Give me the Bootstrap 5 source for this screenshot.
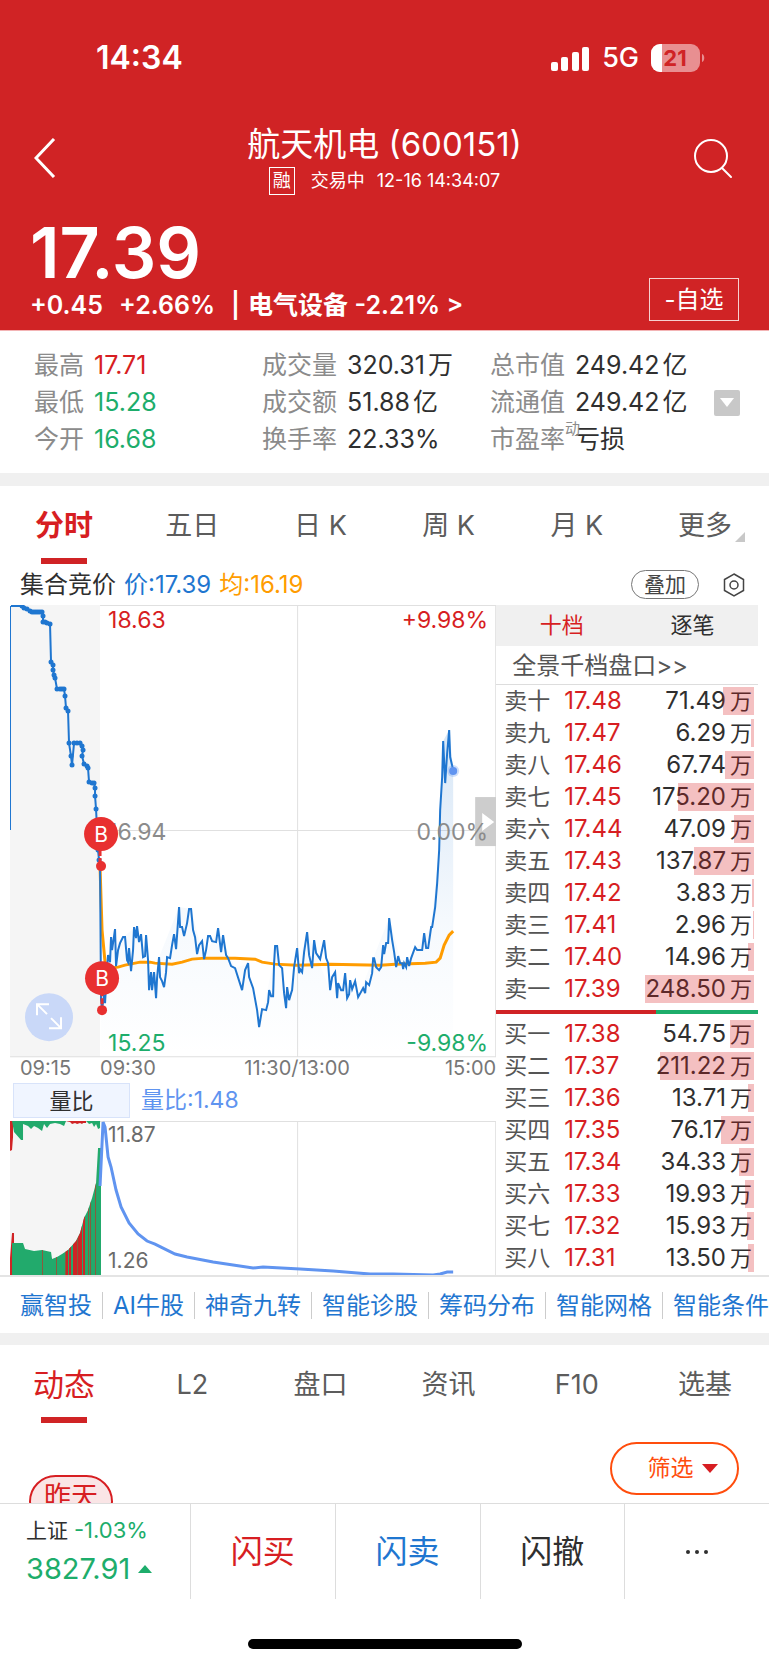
<!DOCTYPE html>
<html lang="zh-CN">
<head>
<meta charset="utf-8">
<meta name="viewport" content="width=device-width, initial-scale=1">
<title>航天机电 (600151)</title>
<link rel="stylesheet" href="https://cdn.jsdelivr.net/npm/bootstrap@5.3.0/dist/css/bootstrap.min.css">
<style>
  :root { --up: #d71e22; --down: #1dad6b; --brand: #d02325; --link: #1f76d0; --ink: #2f2f2f; --muted: #8b8b8b; }
  body { font-family: Inter, "Noto Sans CJK SC", sans-serif; color: var(--ink); background: #fff; overflow-x: hidden; }
  button { font-family: inherit; }
  a { text-decoration: none; }
  .plain { background: none; border: 0; padding: 0; color: inherit; }
  .up { color: var(--up); }
  .down { color: var(--down); }
  .blue { color: var(--link); }

  .quote-head { background: var(--brand); color: #fff; padding: 39px 30px 8px; border-bottom: 1px solid #f3b4b5; }
  .status { height: 38px; padding: 0 34px 0 66px; }
  .clock { font-size: 32px; font-weight: 600; }
  .network { font-size: 27px; font-weight: 500; }
  .title-row { margin-top: 47px; }
  .title-row h1 { font-size: 33px; line-height: 40px; font-weight: 400; }
  .head-icon { width: 46px; margin-top: 14px; }
  .session { font-size: 18px; line-height: 34px; }
  .margin-flag { border: 1px solid #fff; width: 26px; height: 28px; font-size: 18px; line-height: 26px; text-align: center; }
  .last { font-size: 70px; line-height: 70px; font-weight: 600; }
  .change { font-size: 25px; line-height: 34px; font-weight: 600; }
  .price-row { margin-top: 20px; }
  .watch { border: 1px solid #f6d0d0; width: 90px; height: 43px; font-size: 24px; margin-bottom: 1px; }

  .stats { padding: 16px 29px 15px 34px; font-size: 25px; line-height: 37px; }
  .stats dt { font-weight: 400; color: var(--muted); }
  .stats dd { margin: 0 0 0 10px; }
  .stats .s1, .stats .s2 { width: 228px; }
  .unit { margin-left: 3px; }
  .dyn { position: absolute; left: 100%; top: -4px; font-size: 15px; line-height: 24px; }
  .more-stats { width: 26px; height: 26px; background: #c8c8c8; border-radius: 2px; }
  .band { height: 13px; background: #f0f0f0; }
  .band-thin { height: 12px; }

  .tabs-row a { flex: 1 1 0; padding-top: 20px; font-size: 27px; line-height: 40px; color: #5c5c5c; text-align: center; }
  .tabs-row a.active { color: var(--up); font-size: 31px; }
  .tabs-row a.active::after { content: ""; display: block; width: 46px; height: 6px; margin: 12px auto 0; background: var(--brand); }
  .period a.active { font-size: 29px; font-weight: 700; }
  .corner { margin: 0 -13px 0 3px; vertical-align: -7px; }

  .info { height: 41px; padding: 0 24px 0 20px; font-size: 24px; }
  .avg { color: #ff9c00; }
  .overlay-btn { border: 1px solid #777; border-radius: 15px; width: 68px; height: 29px; font-size: 21px; line-height: 26px; color: #444; }

  .board { padding: 0 11px 0 10px; }
  .charts { flex: 0 0 65%; }
  .charts svg { display: block; width: 100%; height: auto; }
  .indicator { height: 39px; padding: 0 0 2px 3px; font-size: 23px; color: #6094f0; gap: 11px; }
  .indicator button { width: 117px; height: 35px; border: 1px solid #d8e3fa; background: #f0f5ff; font-size: 22px; line-height: 30px; color: var(--ink); }

  .book-tabs { height: 41px; background: #f0f0f0; font-size: 22px; }
  .depth-link { height: 39px; padding-left: 16px; font-size: 24px; line-height: 40px; color: #555; border-bottom: 1px solid #ddd; }
  .depth { width: 100%; font-size: 24px; line-height: 32px; }
  .depth td, .depth th { padding: 0; height: 32px; font-weight: 400; white-space: nowrap; }
  .depth th { width: 68px; padding-left: 8px; color: #555; font-size: 23px; }
  .depth .vol { position: relative; text-align: right; padding-right: 6px; }
  .depth .vol span { position: absolute; right: 4px; top: 2px; height: 28px; background: rgba(215, 30, 34, .28); }
  .depth .vol i { font-style: normal; font-size: 22px; margin-left: 4px; }
  .split { height: 4px; margin: 5px 0 4px; background: var(--down); }
  .split div { height: 4px; background: var(--brand); }

  .tools { height: 58px; border-top: 2px solid #e4e4e4; padding-left: 10px; overflow: hidden; white-space: nowrap; font-size: 24px; }
  .tools a { color: var(--link); padding: 0 10px; line-height: 27px; flex: none; }
  .tools a + a { border-left: 1px solid #ccc; }

  .feed { padding: 19px 30px 0 29px; }
  .filter { width: 129px; height: 53px; border: 2px solid #ff4d0d; border-radius: 27px; color: #ff4d0d; font-size: 23px; }
  .day { margin-top: 33px; width: 84px; height: 53px; border: 2px solid var(--up); border-radius: 27px; background: #fae5e6; color: var(--up); font-size: 27px; line-height: 40px; text-align: center; }

  .trade { background: #fff; border-top: 1px solid #ddd; }
  .trade-row { height: 95px; }
  .trade-row button { flex: 1 1 0; border-left: 1px solid #ddd; font-size: 32px; }
  .index { flex: 0 0 190px; padding: 8px 0 0 26px; }
  .index-top { font-size: 21px; line-height: 36px; }
  .index-top .down { font-size: 22px; }
  .index-val { font-size: 29px; line-height: 40px; }
  .home-bar { width: 274px; height: 10px; border-radius: 5px; background: #000; margin: 40px auto 16px; }
</style>
</head>
<body>
<header class="quote-head">
  <div class="status d-flex align-items-center justify-content-between">
    <span class="clock">14:34</span>
    <span class="d-flex align-items-center">
      <svg width="39" height="25" viewBox="0 0 39 25" fill="#fff"><rect x="0" y="16" width="7" height="9" rx="2"/><rect x="10" y="11" width="7" height="14" rx="2"/><rect x="21" y="6" width="7" height="19" rx="2"/><rect x="31" y="1" width="7" height="24" rx="2"/></svg>
      <span class="network mx-2 ps-1">5G</span>
      <svg class="ms-1" width="54" height="28" viewBox="0 0 54 28"><defs><clipPath id="cell"><rect width="49" height="28" rx="9"/></clipPath></defs><g clip-path="url(#cell)"><rect width="49" height="28" fill="#e88f91"/><rect width="11" height="28" fill="#fff"/></g><path d="M51 10c3 1 3 7 0 8z" fill="#e88f91"/><text x="24" y="22" text-anchor="middle" font-size="22" font-weight="700" fill="#d02325">21</text></svg>
    </span>
  </div>
  <div class="title-row d-flex align-items-start justify-content-between">
    <button class="plain head-icon d-flex ps-1" aria-label="返回"><svg width="24" height="40" viewBox="0 0 24 40" fill="none" stroke="#fff" stroke-width="3"><path d="M20 1 2 20l18 19"/></svg></button>
    <div class="text-center">
      <h1 class="m-0">航天机电 (600151)</h1>
      <div class="session d-flex align-items-center justify-content-center"><span class="margin-flag">融</span><span class="ms-3">交易中</span><span class="ms-2 ps-1">12-16 14:34:07</span></div>
    </div>
    <button class="plain head-icon d-flex justify-content-end pe-1" aria-label="搜索"><svg width="42" height="42" viewBox="0 0 42 42" fill="none" stroke="#fff" stroke-width="2"><circle cx="18" cy="18" r="16"/><path d="m29 30 9 9" stroke-linecap="round"/></svg></button>
  </div>
  <div class="price-row d-flex align-items-end justify-content-between">
    <div>
      <div class="last">17.39</div>
      <div class="change d-flex"><span>+0.45</span><span class="ms-3">+2.66%</span><span class="ms-3">|</span><span class="ms-2">电气设备 -2.21% &gt;</span></div>
    </div>
    <button class="plain watch">-自选</button>
  </div>
</header>

<main>
<section class="stats d-flex">
  <dl class="s1 m-0">
    <div class="d-flex"><dt>最高</dt><dd class="up">17.71</dd></div>
    <div class="d-flex"><dt>最低</dt><dd class="down">15.28</dd></div>
    <div class="d-flex"><dt>今开</dt><dd class="down">16.68</dd></div>
  </dl>
  <dl class="s2 m-0">
    <div class="d-flex"><dt>成交量</dt><dd>320.31<span class="unit">万</span></dd></div>
    <div class="d-flex"><dt>成交额</dt><dd>51.88<span class="unit">亿</span></dd></div>
    <div class="d-flex"><dt>换手率</dt><dd>22.33%</dd></div>
  </dl>
  <dl class="m-0">
    <div class="d-flex"><dt>总市值</dt><dd>249.42<span class="unit">亿</span></dd></div>
    <div class="d-flex"><dt>流通值</dt><dd>249.42<span class="unit">亿</span></dd></div>
    <div class="d-flex"><dt class="position-relative">市盈率<span class="dyn">动</span></dt><dd>亏损</dd></div>
  </dl>
  <button class="plain more-stats d-flex align-items-center justify-content-center ms-auto align-self-center" aria-label="展开"><svg width="14" height="9" viewBox="0 0 14 9"><path d="M0 0h14L7 9z" fill="#fff"/></svg></button>
</section>
<div class="band"></div>

<nav class="tabs-row period d-flex">
  <a class="active" href="#">分时</a><a href="#">五日</a><a href="#">日 K</a><a href="#">周 K</a><a href="#">月 K</a>
  <a href="#">更多<svg class="corner" width="10" height="10" viewBox="0 0 10 10"><path d="M10 0v10H0z" fill="#c8c8c8"/></svg></a>
</nav>

<div class="info d-flex align-items-center">
  <span>集合竞价</span><span class="blue ms-2">价:17.39</span><span class="avg ms-2">均:16.19</span>
  <button class="plain overlay-btn ms-auto me-4">叠加</button>
  <button class="plain d-flex" aria-label="设置"><svg width="22" height="26" viewBox="0 0 22 26" fill="none" stroke="#444" stroke-width="1.500"><path d="M11 2 20.500 7.500v11L11 24 1.500 18.500v-11z"/><circle cx="11" cy="13" r="4"/></svg></button>
</div>

<section class="board d-flex">
  <div class="charts">
    <svg viewBox="10 605 486 477" font-size="23">
      <defs>
        <linearGradient id="fade" x1="0" y1="0" x2="0" y2="1"><stop offset="0" stop-color="#1f76d0" stop-opacity=".18"/><stop offset=".6" stop-color="#1f76d0" stop-opacity=".04"/><stop offset="1" stop-color="#1f76d0" stop-opacity="0"/></linearGradient>
        <marker id="dot" markerWidth="6" markerHeight="6" refX="3" refY="3" markerUnits="userSpaceOnUse"><circle cx="3" cy="3" r="2.500" fill="#1f76d0"/></marker>
      </defs>
      <rect x="10" y="605" width="90" height="452" fill="#f5f5f5"/>
      <path d="M100 605.500h396M297.500 605v452M100 830.500h396M10 1056.500h486M495.500 605v452" fill="none" stroke="#e0e0e0"/>
      <path fill="url(#fade)" d="M101 1056V1008L108 955 123 937 137 926 152 990 159 957 179 907 191 909 204 959 218 928 235 968 248 963 259 1027 277 946 286 1008 307 932 330 990 345 990 358 997 373 958 389 918 403 969 431 927 439 850 443 741 449 730 453 770V1056z"/>
      <g fill="none" stroke-linejoin="miter">
        <path stroke="#ff9c00" stroke-width="3" d="M100 867 102 930 105 962 110 968 118 967 125 965 140 962 150 962 155 963 172 964 182 962 192 959 205 958 235 958 255 959 262 962 275 964 297 965 330 964 380 965 395 964 425 963 436 962 440 958 444 945 449 935 453 931"/>
        <path stroke="#1f76d0" d="M10.500 830V606"/>
        <path stroke="#1f76d0" stroke-width="2" marker-mid="url(#dot)" d="M11 606 22 606 24 608 27 609 30 611 32 612 34 612 36 612 38 612 40 612 42 612 43 616 43 622 45 622 47 623 50 624 51 662 53 665 53 670 54 675 55 678 57 689 60 689 62 689 64 689 65 696 66 708 68 711 69 743 71 756 72 765 74 743 77 743 80 743 82 746 83 750 82 756 84 764 87 766 88 768 89 782 92 783 94 783 95 788 95 796 96 809 98 850 99 860 100 868"/>
        <path stroke="#1f76d0" stroke-width="2" d="M100 867 101 1000 102 1009 104 995 105 1003 107 967 108 955 110 962 111 937 112 950 115 929 116 966 118 950 120 943 123 937 125 937 127 960 128 962 129 948 131 971 133 950 134 927 136 938 137 926 139 942 141 934 143 957 145 956 146 935 148 960 149 990 151 972 152 990 154 972 156 998 157 978 159 957 160 977 162 981 164 987 166 972 167 957 170 958 172 945 174 934 176 949 179 907 180 927 182 927 184 936 187 923 189 909 191 909 193 930 195 937 197 954 199 945 202 941 204 959 206 950 208 936 210 936 212 941 216 942 218 928 221 952 223 935 226 955 228 958 231 966 235 968 242 990 245 970 248 963 249 977 253 988 257 1010 259 1027 262 1009 266 1010 268 1002 269 990 271 996 273 996 274 963 275 946 277 946 279 965 282 968 284 993 286 1008 287 987 289 1000 291 993 292 990 294 967 297 948 299 973 300 969 302 972 304 952 307 932 309 955 312 968 314 940 316 953 320 959 324 940 326 958 328 963 330 990 332 977 335 972 337 998 338 983 341 990 343 990 345 973 347 998 349 994 350 980 352 989 355 981 358 997 363 988 365 993 366 982 369 985 372 973 373 958 374 958 376 967 379 970 381 967 383 945 384 954 386 943 388 943 389 918 392 940 394 952 396 967 398 956 400 963 402 963 403 969 404 963 406 967 407 957 409 966 411 958 415 947 417 950 422 950 424 933 426 948 428 948 431 927 432 927 435 907 437 883 439 850 440 810 442 777 443 741 445 783 447 753 449 730 450 757 453 770"/>
      </g>
      <circle cx="453" cy="771" r="6" fill="#6094f0" opacity=".3"/><circle cx="453" cy="771" r="4" fill="#6094f0"/>
      <rect x="475" y="797" width="21" height="49" fill="#cdcdcd"/><path d="M482 813v18l12-9z" fill="#fff"/>
      <text x="108" y="628" fill="#d71e22">18.63</text>
      <text x="488" y="628" text-anchor="end" fill="#d71e22">+9.98%</text>
      <text x="108" y="840" fill="#8b8b8b">16.94</text>
      <text x="488" y="840" text-anchor="end" fill="#8b8b8b">0.00%</text>
      <text x="108" y="1051" fill="#1dad6b">15.25</text>
      <text x="488" y="1051" text-anchor="end" fill="#1dad6b">-9.98%</text>
      <path d="M100 850v16M102 990v20" stroke="#e83030" stroke-width="3" stroke-dasharray="6 2"/>
      <g fill="#e83030"><circle cx="101" cy="866" r="5"/><circle cx="102" cy="1010" r="5"/><circle cx="101" cy="834" r="17"/><circle cx="102" cy="978" r="17"/></g>
      <g fill="#fff" font-size="21" text-anchor="middle"><text x="101" y="842">B</text><text x="102" y="986">B</text></g>
      <circle cx="49" cy="1017" r="24" fill="#c9d8f8"/><path d="M37 1015v-11h12M38 1005l9 9M51 1018l9 9M61 1017v11H49" fill="none" stroke="#fff" stroke-width="2"/>
      <g font-size="20" fill="#777"><text x="20" y="1075">09:15</text><text x="100" y="1075">09:30</text><text x="297" y="1075" text-anchor="middle">11:30/13:00</text><text x="496" y="1075" text-anchor="end">15:00</text></g>
    </svg>
    <div class="indicator d-flex align-items-center"><button class="p-0">量比</button><span>量比:1.48</span></div>
    <svg viewBox="10 1121 486 154" font-size="21" fill="#6b6b6b">
      <defs><clipPath id="hist"><path d="M12 1275V1243L23 1243 25 1249 34 1251 42 1250 51 1252 52 1259 57 1257 62 1254 68 1250 76 1241 80 1233 84 1218 88 1210 92 1198 96 1183 98 1148 101 1148V1275z"/></clipPath></defs>
      <rect x="10" y="1121" width="90" height="154" fill="#f5f5f5"/>
      <path d="M10 1121.500h486M297.500 1121v154M495.500 1121v154" stroke="#e0e0e0"/>
      <g clip-path="url(#hist)"><rect x="10" y="1121" width="91" height="154" fill="#22aa6c"/><path d="M67 1121v154M70 1121v154M74 1121v154M76 1121v154M79 1121v154M81 1121v154M84 1121v154" stroke="#d02325" stroke-width="2"/><path d="M42.500 1121v154M56.500 1121v154M65.500 1121v154M77.500 1121v154M88.500 1121v154M90.500 1121v154M95.500 1121v154" stroke="#8c5a3c"/></g>
      <path d="M10 1275V1258L12 1233H14V1243H12V1275zM10 1121H13V1137L12 1150 10 1151zM66 1121h20v2h-3l-1 1-2-1-3 1-2-1-3 1-2-2z" fill="#d02325"/>
      <path d="M12 1121H66L64 1126 60 1124 55 1123 50 1124 47 1128 44 1124 42 1131 38 1128 34 1126 31 1129 28 1126 23 1124V1140H21L14 1132zM86 1121h14v7l-2 1-2-5-2 3-2-4-3 1z" fill="#22aa6c"/>
      <path fill="none" stroke="#6094f0" stroke-width="3" d="M100 1186 103 1122 105 1127 108 1157 111 1167 116 1190 121 1207 129 1223 138 1234 147 1241 155 1244 167 1250 175 1254 187 1257 213 1262 233 1265 253 1268 263 1267 300 1269 333 1271 370 1274 393 1274 433 1275 440 1274 447 1272 453 1272"/>
      <text x="108" y="1142">11.87</text><text x="108" y="1268">1.26</text>
    </svg>
  </div>

  <div class="flex-fill">
    <div class="book-tabs d-flex"><button class="plain flex-fill w-50 up">十档</button><button class="plain flex-fill w-50">逐笔</button></div>
    <a class="depth-link d-block" href="#">全景千档盘口&gt;&gt;</a>
    <table class="depth"><tbody>
      <tr><th>卖十</th><td class="up">17.48</td><td class="vol">71.49<i>万</i><span style="width:31px"></span></td></tr>
      <tr><th>卖九</th><td class="up">17.47</td><td class="vol">6.29<i>万</i><span style="width:3px"></span></td></tr>
      <tr><th>卖八</th><td class="up">17.46</td><td class="vol">67.74<i>万</i><span style="width:29px"></span></td></tr>
      <tr><th>卖七</th><td class="up">17.45</td><td class="vol">175.20<i>万</i><span style="width:76px"></span></td></tr>
      <tr><th>卖六</th><td class="up">17.44</td><td class="vol">47.09<i>万</i><span style="width:20px"></span></td></tr>
      <tr><th>卖五</th><td class="up">17.43</td><td class="vol">137.87<i>万</i><span style="width:60px"></span></td></tr>
      <tr><th>卖四</th><td class="up">17.42</td><td class="vol">3.83<i>万</i><span style="width:2px"></span></td></tr>
      <tr><th>卖三</th><td class="up">17.41</td><td class="vol">2.96<i>万</i><span style="width:1px"></span></td></tr>
      <tr><th>卖二</th><td class="up">17.40</td><td class="vol">14.96<i>万</i><span style="width:6px"></span></td></tr>
      <tr><th>卖一</th><td class="up">17.39</td><td class="vol">248.50<i>万</i><span style="width:109px"></span></td></tr>
    </tbody></table>
    <div class="split"><div style="width:61%"></div></div>
    <table class="depth"><tbody>
      <tr><th>买一</th><td class="up">17.38</td><td class="vol">54.75<i>万</i><span style="width:24px"></span></td></tr>
      <tr><th>买二</th><td class="up">17.37</td><td class="vol">211.22<i>万</i><span style="width:94px"></span></td></tr>
      <tr><th>买三</th><td class="up">17.36</td><td class="vol">13.71<i>万</i><span style="width:6px"></span></td></tr>
      <tr><th>买四</th><td class="up">17.35</td><td class="vol">76.17<i>万</i><span style="width:33px"></span></td></tr>
      <tr><th>买五</th><td class="up">17.34</td><td class="vol">34.33<i>万</i><span style="width:15px"></span></td></tr>
      <tr><th>买六</th><td class="up">17.33</td><td class="vol">19.93<i>万</i><span style="width:9px"></span></td></tr>
      <tr><th>买七</th><td class="up">17.32</td><td class="vol">15.93<i>万</i><span style="width:7px"></span></td></tr>
      <tr><th>买八</th><td class="up">17.31</td><td class="vol">13.50<i>万</i><span style="width:6px"></span></td></tr>
    </tbody></table>
  </div>
</section>

<nav class="tools d-flex align-items-center"><a href="#">赢智投</a><a href="#">AI牛股</a><a href="#">神奇九转</a><a href="#">智能诊股</a><a href="#">筹码分布</a><a href="#">智能网格</a><a href="#">智能条件单</a></nav>
<div class="band band-thin"></div>

<nav class="tabs-row d-flex"><a class="active" href="#">动态</a><a href="#">L2</a><a href="#">盘口</a><a href="#">资讯</a><a href="#">F10</a><a href="#">选基</a></nav>
<section class="feed d-flex justify-content-between align-items-start">
  <span class="day">昨天</span>
  <button class="plain filter d-flex align-items-center justify-content-center ps-3">筛选<svg class="ms-2" width="16" height="9" viewBox="0 0 16 9"><path d="M0 0h16L8 9z" fill="#d71e22"/></svg></button>
</section>
</main>

<footer class="trade fixed-bottom">
  <div class="trade-row d-flex">
    <div class="index">
      <div class="index-top">上证 <span class="down">-1.03%</span></div>
      <div class="index-val down d-flex align-items-center">3827.91<svg class="ms-2" width="14" height="8" viewBox="0 0 14 8"><path d="M7 0l7 8H0z" fill="#1dad6b"/></svg></div>
    </div>
    <button class="plain up">闪买</button>
    <button class="plain blue">闪卖</button>
    <button class="plain">闪撤</button>
    <button class="plain d-flex align-items-center justify-content-center" aria-label="更多"><svg width="24" height="6" viewBox="0 0 24 6" fill="#2f2f2f"><circle cx="3" cy="3" r="2"/><circle cx="12" cy="3" r="2"/><circle cx="21" cy="3" r="2"/></svg></button>
  </div>
  <div class="home-bar"></div>
</footer>
<script src="https://cdn.jsdelivr.net/npm/bootstrap@5.3.0/dist/js/bootstrap.bundle.min.js"></script>
</body>
</html>
